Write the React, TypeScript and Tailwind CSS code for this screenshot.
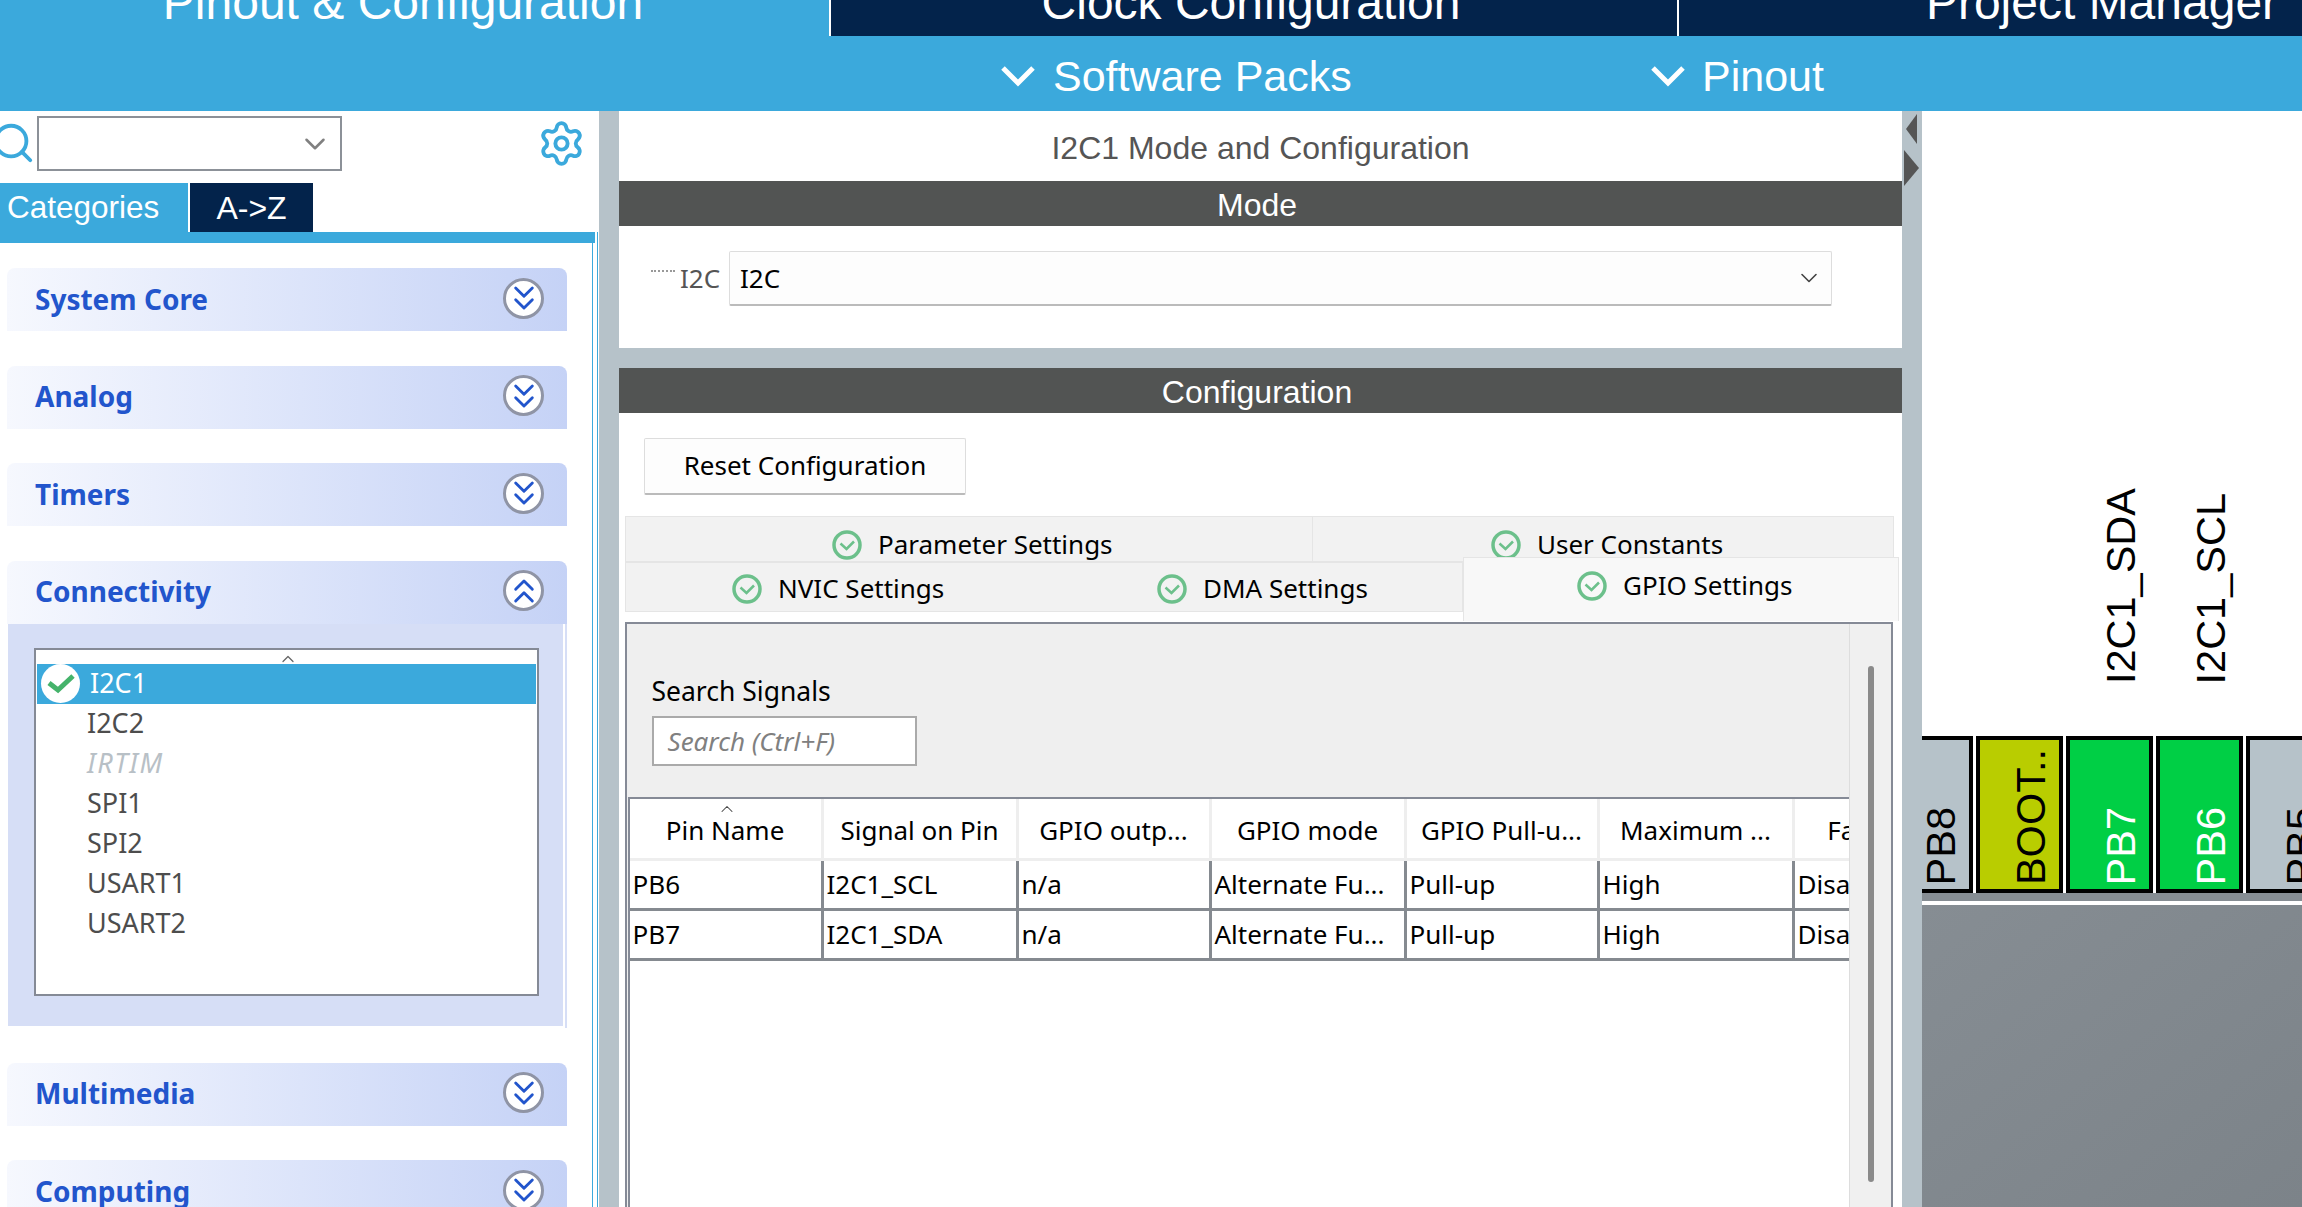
import React from 'react';
import { ChevronDown, ChevronUp, ChevronsDown, ChevronsUp, Search, Settings } from 'lucide-react';

const arial = "[font-family:'Liberation_Sans',Arial,sans-serif]";
const ui = "[font-family:'Noto_Sans',Tahoma,sans-serif]";

const columns = [
  { label: 'Pin Name', width: 'w-[194px]', row1: 'PB6', row2: 'PB7' },
  { label: 'Signal on Pin', width: 'w-[195px]', row1: 'I2C1_SCL', row2: 'I2C1_SDA' },
  { label: 'GPIO outp...', width: 'w-[193px]', row1: 'n/a', row2: 'n/a' },
  { label: 'GPIO mode', width: 'w-[195px]', row1: 'Alternate Fu...', row2: 'Alternate Fu...' },
  { label: 'GPIO Pull-u...', width: 'w-[193px]', row1: 'Pull-up', row2: 'Pull-up' },
  { label: 'Maximum ...', width: 'w-[195px]', row1: 'High', row2: 'High' },
  { label: 'Fast Mode', width: 'w-[195px]', row1: 'Disable', row2: 'Disable' },
];

const pins = [
  { name: 'PB8', fill: 'bg-[#b6c2c9]', text: 'text-black', width: 'w-[87px] ml-[-36px]' },
  { name: 'BOOT..', fill: 'bg-[#b9cd00]', text: 'text-black', width: 'w-[87px]' },
  { name: 'PB7', fill: 'bg-[#00cf45]', text: 'text-white', width: 'w-[87px]', signal: 'I2C1_SDA' },
  { name: 'PB6', fill: 'bg-[#00cf45]', text: 'text-white', width: 'w-[87px]', signal: 'I2C1_SCL' },
  { name: 'PB5', fill: 'bg-[#b6c2c9]', text: 'text-black', width: 'w-[87px]' },
];

const CategoryHeader = ({ label, open = false }: { label: string; open?: boolean }) => (
  <div className="h-[63px] w-[560px] shrink-0 rounded-t-lg bg-gradient-to-r from-[#f6f8fe] to-[#c5d2f6] flex items-center justify-between pl-[28px] pr-[23px]">
    <span className={`${ui} text-[28px] font-bold text-[#2255cc] -mt-[2px]`}>{label}</span>
    <div className="w-[41px] h-[41px] -mt-[3px] rounded-full bg-white border-[3px] border-[#8f94a5] flex items-center justify-center text-[#2255cc] overflow-hidden">
      {open ? <ChevronsUp size={40} strokeWidth={1.7} className="shrink-0" /> : <ChevronsDown size={40} strokeWidth={1.7} className="shrink-0" />}
    </div>
  </div>
);

const StatusIcon = () => (
  <svg width="30" height="30" viewBox="0 0 30 30" className="shrink-0">
    <circle cx="15" cy="15" r="13" fill="none" stroke="#6cc08b" strokeWidth="3.5" />
    <path d="M8.5 13.5 L14.5 19 L22 11.5" fill="none" stroke="#6cc08b" strokeWidth="2.5" />
  </svg>
);

const TabLabel = ({ label, className = '' }: { label: string; className?: string }) => (
  <div className={`flex items-center gap-[16px] ${className}`}>
    <StatusIcon />
    <span className={`${ui} text-[26px] text-black whitespace-nowrap`}>{label}</span>
  </div>
);

const Sidebar = () => (
  <div className="w-[599px] shrink-0 bg-white flex flex-col overflow-hidden">
    <div className="h-[72px] shrink-0 flex items-start">
      <Search size={46} strokeWidth={2} className="text-[#3ba9dc] -ml-[10px] mt-[9px] shrink-0" />
      <div className="ml-[1px] mt-[5px] w-[305px] h-[55px] border-2 border-[#8c9198] flex items-center justify-end pr-[8px] text-[#808080]">
        <ChevronDown size={34} strokeWidth={1.8} />
      </div>
      <Settings size={49} strokeWidth={1.9} className="text-[#3ba9dc] ml-auto mr-[13px] mt-[8px]" />
    </div>
    <div className="h-[49px] shrink-0 flex">
      <div className={`${arial} w-[188px] bg-[#3ba9dc] text-white text-[31.5px] flex items-center pl-[7px]`}>Categories</div>
      <div className={`${arial} w-[123px] ml-[2px] bg-[#03234b] text-white text-[32px] flex items-center justify-center`}>{'A->Z'}</div>
    </div>
    <div className="flex-1 min-h-0 w-[598px] border-r border-[#3ba9dc] flex flex-col">
      <div className="h-[11px] w-[595px] bg-[#3ba9dc] shrink-0" />
      <div className="flex-1 w-[593px] border-r border-[#3ba9dc] pl-[7px] pt-[25px] flex flex-col gap-[34.5px]">
        <CategoryHeader label="System Core" />
        <CategoryHeader label="Analog" />
        <CategoryHeader label="Timers" />
        <div className="mb-[0.5px] shrink-0">
          <CategoryHeader label="Connectivity" open />
          <div className="w-[559px] ml-[1px] pr-[2px] pb-[2px] border-r-2 border-[#d6def6]">
            <div className="h-[402px] bg-[#d6def6] pl-[26px] pt-[24px]">
              <div className="relative w-[505px] h-[348px] bg-white border-2 border-[#858a96] pt-[14px] px-[1px]">
                <ChevronUp size={20} strokeWidth={1.5} className="absolute left-[242px] -top-[1px] text-[#666]" />
                <div className="relative h-[40px] bg-[#3ba9dc] flex items-center pl-[53px] text-white">
                  <div className="absolute left-[4px] top-0 w-[39px] h-[39px] rounded-full bg-white flex items-center justify-center">
                    <svg width="30" height="22" viewBox="0 0 30 22">
                      <path d="M3 11 L12 18 L27 4" fill="none" stroke="#45b36b" strokeWidth="5" />
                    </svg>
                  </div>
                  <span className={`${ui} text-[27px]`}>I2C1</span>
                </div>
                {['I2C2', 'IRTIM', 'SPI1', 'SPI2', 'USART1', 'USART2'].map((name) => (
                  <div
                    key={name}
                    className={`${ui} h-[40px] flex items-center pl-[50px] text-[27px] ${name === 'IRTIM' ? 'italic tracking-[1.5px] text-[#b8c0c6]' : 'text-[#4d4d4d]'}`}
                  >
                    {name}
                  </div>
                ))}
              </div>
            </div>
          </div>
        </div>
        <CategoryHeader label="Multimedia" />
        <CategoryHeader label="Computing" />
      </div>
    </div>
  </div>
);

const GpioTable = () => (
  <div className="flex-1 min-w-0 overflow-hidden flex flex-col">
    <div className="h-[173px] bg-[#efefef] pl-[25px] pt-[49px] shrink-0">
      <div className={`${ui} text-[26.5px] text-black leading-[36px]`}>Search Signals</div>
      <div className={`${ui} mt-[7px] w-[265px] h-[50px] bg-white border-2 border-[#aaaaaa] flex items-center pl-[14px] text-[26px] italic text-[#808080]`}>
        Search (Ctrl+F)
      </div>
    </div>
    <div className="flex-1 bg-white ml-[1px] border-l-2 border-t-2 border-[#858a96]">
      <div className="flex h-[62px] border-b-[3px] border-[#eeeeee] w-[1400px]">
        {columns.map((col, i) => (
          <div key={col.label} className={`${col.width} ${ui} relative shrink-0 flex items-center justify-center pt-[4px] text-[26px] text-black border-r-[3px] border-[#eeeeee]`}>
            {i === 0 && <ChevronUp size={20} strokeWidth={1.25} className="absolute left-[87px] top-0 text-[#444]" />}
            {col.label}
          </div>
        ))}
      </div>
      {(['row1', 'row2'] as const).map((row) => (
        <div key={row} className="flex h-[50px] border-b-[3px] border-[#858a90] w-[1400px]">
          {columns.map((col) => (
            <div key={col.label} className={`${col.width} ${ui} shrink-0 flex items-center pl-[3px] text-[26px] text-black border-r-[3px] border-[#858a90] whitespace-nowrap`}>
              {col[row]}
            </div>
          ))}
        </div>
      ))}
    </div>
  </div>
);

const Center = () => (
  <div className="w-[1283px] shrink-0 bg-white flex flex-col overflow-hidden">
    <div className={`${arial} h-[70px] shrink-0 flex items-center justify-center pt-[3px] text-[32px] text-[#555555]`}>I2C1 Mode and Configuration</div>
    <div className={`${arial} h-[45px] shrink-0 bg-[#525453] text-white text-[32px] flex items-center justify-center pr-[7px] pt-[3px]`}>Mode</div>
    <div className="h-[122px] shrink-0 pt-[25px] pl-[32px] flex items-start">
      <span className="w-[24px] mt-[19px] border-t-2 border-dotted border-[#999999]" />
      <span className={`${ui} ml-[5px] w-[49px] text-[26px] text-[#555555] h-[54px] flex items-center`}>I2C</span>
      <div className={`${ui} w-[1103px] h-[55px] bg-[#fdfdfd] border border-[#dddddd] border-b-2 border-b-[#bbbbbb] rounded-[2px] flex items-center justify-between pl-[10px] pr-[8px] text-[26px] text-black`}>
        I2C
        <ChevronDown size={28} strokeWidth={1.4} className="text-[#444]" />
      </div>
    </div>
    <div className="h-[20px] bg-[#b6c2c9] shrink-0" />
    <div className={`${arial} h-[45px] bg-[#525453] text-white text-[32px] flex items-center justify-center pr-[7px] pt-[3px] shrink-0`}>Configuration</div>
    <div className="pt-[25px] pl-[25px] shrink-0">
      <div className={`${ui} w-[322px] h-[57px] bg-[#fdfdfd] border border-[#dddddd] border-b-2 border-b-[#bbbbbb] rounded-[2px] flex items-center justify-center pb-[2px] text-[26px] text-black`}>
        Reset Configuration
      </div>
    </div>
    <div className="mt-[21px] ml-[6px] w-[1280px] h-[106px] shrink-0">
      <div className="flex h-[46px] w-[1269px] bg-[#f2f2f2] border border-[#e5e5e5]">
        <div className="w-[687px] border-r border-[#e5e5e5] overflow-hidden pl-[206px] pt-[8px]">
          <TabLabel label="Parameter Settings" />
        </div>
        <div className="flex-1 overflow-hidden pl-[178px] pt-[8px]">
          <TabLabel label="User Constants" />
        </div>
      </div>
      <div className="flex h-[60px]">
        <div className="w-[838px] h-[50px] bg-[#f2f2f2] border border-[#e5e5e5] flex items-center relative">
          <TabLabel label="NVIC Settings" className="absolute left-[106px] top-[6px]" />
          <TabLabel label="DMA Settings" className="absolute left-[531px] top-[6px]" />
        </div>
        <div className="w-[436px] h-[64px] -mt-[5px] bg-[#f8f8f8] border border-[#e5e5e5] border-b-0 pl-[113px] pt-[8px] relative">
          <TabLabel label="GPIO Settings" />
        </div>
      </div>
    </div>
    <div className="ml-[5.5px] w-[1268.5px] flex-1 min-h-0 flex border-2 border-[#858a96] border-b-0 bg-[#efefef]">
      <GpioTable />
      <div className="w-[42px] shrink-0 bg-[#f0f0f0] border-l border-[#dddddd] pl-[18px] pt-[42px]">
        <div className="w-[6px] h-[516px] rounded-full bg-[#8a8a8a]" />
      </div>
    </div>
  </div>
);

const Chip = () => (
  <div className="flex-1 min-w-0 bg-white overflow-hidden flex flex-col">
    <div className="flex gap-[3px] shrink-0">
      {pins.map((pin) => (
        <div key={pin.name} className={`${pin.width} shrink-0 flex flex-col`}>
          <div className="h-[625px] flex items-end justify-center pb-[52px] pl-[23px]">
            {pin.signal && (
              <span className={`${arial} [writing-mode:vertical-rl] rotate-180 text-[41.5px] leading-none text-black whitespace-nowrap`}>{pin.signal}</span>
            )}
          </div>
          <div className={`${pin.fill} ${pin.text} ${arial} h-[157px] border-4 border-black flex items-end justify-center pl-[22px] pb-[4px]`}>
            <span className="[writing-mode:vertical-rl] rotate-180 text-[41.5px] leading-none whitespace-nowrap">{pin.name}</span>
          </div>
        </div>
      ))}
    </div>
    <div className="h-[8px] bg-[#868d93] shrink-0" />
    <div className="h-[4px] bg-white shrink-0" />
    <div className="flex-1 bg-gradient-to-br from-[#868d93] to-[#7c8389]" />
  </div>
);

const HeaderChevron = () => (
  <svg width="34" height="22" viewBox="0 0 34 22" className="shrink-0">
    <path d="M2 3 L17 18 L32 3" fill="none" stroke="currentColor" strokeWidth="5" />
  </svg>
);

const App = () => (
  <div className="w-[2302px] h-[1207px] overflow-hidden flex flex-col bg-white">
    <div className="h-[36px] shrink-0 flex -ml-[17px] w-[2700px] overflow-hidden">
      {[
        { label: 'Pinout & Configuration', bg: 'bg-[#3ba9dc] pr-[6px]' },
        { label: 'Clock Configuration', bg: 'bg-[#03234b] pr-[6px]' },
        { label: 'Project Manager', bg: 'bg-[#03234b]' },
      ].map((tab) => (
        <div
          key={tab.label}
          className={`${tab.bg} ${arial} w-[846px] mr-[2px] shrink-0 overflow-hidden flex items-end justify-center pb-[9px] text-[48px] leading-none text-white whitespace-nowrap`}
        >
          {tab.label}
        </div>
      ))}
    </div>
    <div className={`${arial} h-[75px] shrink-0 bg-[#3ba9dc] text-white text-[43px] flex items-center pt-[5px]`}>
      <div className="ml-[1001px] flex items-center gap-[18px] w-[650px]">
        <HeaderChevron />
        Software Packs
      </div>
      <div className="flex items-center gap-[17px]">
        <HeaderChevron />
        Pinout
      </div>
    </div>
    <div className="flex-1 min-h-0 flex">
      <Sidebar />
      <div className="w-[20px] shrink-0 bg-[#b6c2c9]" />
      <Center />
      <div className="w-[20px] shrink-0 bg-[#b6c2c9] flex flex-col items-center pt-[3px] gap-[6px]">
        <svg width="18" height="30" viewBox="0 0 18 30"><path d="M14 0 L14 30 L3 15 Z" fill="#555555" /></svg>
        <svg width="18" height="36" viewBox="0 0 18 36"><path d="M1 0 L1 36 L16 18 Z" fill="#555555" /></svg>
      </div>
      <Chip />
    </div>
  </div>
);

export default App;
